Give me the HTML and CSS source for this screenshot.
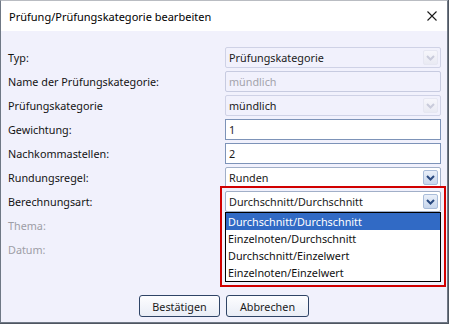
FILE: index.html
```html
<!DOCTYPE html>
<html lang="de">
<head>
<meta charset="utf-8">
<title>Prüfung/Prüfungskategorie bearbeiten</title>
<link rel="stylesheet" href="styles.css">
</head>
<body>
<div class="window">
  <div class="titlebar">
    <span class="title">Prüfung/Prüfungskategorie bearbeiten</span>
    <svg class="close" width="10" height="10" viewBox="0 0 10 10"><path d="M0.5 0.5 L9.5 9.5 M9.5 0.5 L0.5 9.5" stroke="#1a1a1a" stroke-width="1.1" fill="none"/></svg>
  </div>
  <div class="content">
    <div class="form">
      <div class="label">Typ:</div>
      <div class="combo disabled"><span class="val">Prüfungskategorie</span><span class="arrow"><svg width="9" height="6" viewBox="0 0 9 6"><path d="M1 1 L4.5 4.5 L8 1" fill="none" stroke-width="2"/></svg></span></div>

      <div class="label">Name der Prüfungskategorie:</div>
      <div class="textbox disabled"><span class="val">mündlich</span></div>

      <div class="label">Prüfungskategorie</div>
      <div class="combo disabled"><span class="val">mündlich</span><span class="arrow"><svg width="9" height="6" viewBox="0 0 9 6"><path d="M1 1 L4.5 4.5 L8 1" fill="none" stroke-width="2"/></svg></span></div>

      <div class="label">Gewichtung:</div>
      <div class="textbox"><span class="val">1</span></div>

      <div class="label">Nachkommastellen:</div>
      <div class="textbox"><span class="val">2</span></div>

      <div class="label">Rundungsregel:</div>
      <div class="combo"><span class="val">Runden</span><span class="arrow"><svg width="9" height="6" viewBox="0 0 9 6"><path d="M1 1 L4.5 4.5 L8 1" fill="none" stroke-width="2"/></svg></span></div>

      <div class="label">Berechnungsart:</div>
      <div class="combo open"><span class="val">Durchschnitt/Durchschnitt</span><span class="arrow"><svg width="9" height="6" viewBox="0 0 9 6"><path d="M1 1 L4.5 4.5 L8 1" fill="none" stroke-width="2"/></svg></span>
        <div class="highlight"></div>
        <ul class="droplist">
          <li class="selected">Durchschnitt/Durchschnitt</li>
          <li>Einzelnoten/Durchschnitt</li>
          <li>Durchschnitt/Einzelwert</li>
          <li>Einzelnoten/Einzelwert</li>
        </ul>
      </div>

      <div class="label muted">Thema:</div>
      <div></div>

      <div class="label muted">Datum:</div>
      <div></div>
    </div>
    <div class="buttons">
      <button class="btn btn-ok">Bestätigen</button>
      <button class="btn btn-cancel">Abbrechen</button>
    </div>
  </div>
</div>
</body>
</html>
```
FILE: styles.css
```css
* { box-sizing: border-box; }
html, body { margin: 0; padding: 0; }
body {
  width: 449px;
  height: 324px;
  background: #4f5661;
  font-family: "Noto Sans", "Open Sans", sans-serif;
  font-size: 10.8px;
  color: #1a1a1a;
  overflow: hidden;
}
.window {
  width: 448px;
  height: 323px;
  border: 1px solid #6f7885;
  border-top-color: #b9bcc2;
  display: flex;
  flex-direction: column;
  background: #f1f1fc;
}
.titlebar {
  height: 30px;
  background: #ffffff;
  display: flex;
  align-items: center;
  justify-content: space-between;
  padding: 0 10px 0 8px;
  flex: none;
}
.title {
  font-size: 11px;
  color: #000;
}
.close { display: block; }
.content {
  flex: 1;
  display: flex;
  flex-direction: column;
}
.form {
  display: grid;
  grid-template-columns: 217px 216px;
  grid-auto-rows: 21px;
  row-gap: 3px;
  padding: 16px 0 0 7px;
}
.label {
  display: flex;
  align-items: center;
  color: #141414;
  white-space: nowrap;
}
.label.muted { color: #9e9ea6; }
.val {
  flex: 1;
  white-space: nowrap;
  overflow: hidden;
}
.combo, .textbox {
  display: flex;
  align-items: center;
  padding: 0 2px 0 3px;
  height: 21px;
}
.textbox {
  background: #fff;
  border: 1px solid #7d93b8;
}
.textbox.disabled {
  background: #f1f1fc;
  border: 1px solid #c7cbe0;
  border-radius: 2px;
  color: #a3a3ab;
}
.combo {
  background: #fff;
  border: 1px solid #a1afc8;
  border-radius: 2px;
  position: relative;
}
.combo.disabled {
  background: #f1f1fc;
  border-color: #cfd2e6;
}
.arrow {
  width: 15px;
  height: 15px;
  border: 1px solid #a9bcd9;
  border-radius: 2px;
  background: linear-gradient(#e9eff9, #c7d6ec);
  display: flex;
  align-items: center;
  justify-content: center;
  flex: none;
}
.arrow svg path { stroke: #2a4a80; }
.combo.disabled .arrow {
  border-color: #e6e7f2;
  background: linear-gradient(#f6f6fb, #e9eaf3);
}
.combo.disabled .arrow svg path { stroke: #c9cbdb; }
.highlight {
  position: absolute;
  left: -6px;
  top: -6px;
  width: 226px;
  height: 101px;
  border: 2px solid #d10000;
  pointer-events: none;
}
.droplist {
  position: absolute;
  left: -1px;
  top: 20px;
  width: 216px;
  margin: 0;
  padding: 0;
  list-style: none;
  background: #fff;
  border: 1px solid #000;
  z-index: 2;
}
.droplist li {
  height: 17px;
  line-height: 17px;
  padding-left: 2px;
  color: #111;
  white-space: nowrap;
}
.droplist li.selected {
  background: #316ac5;
  color: #fff;
}
.buttons {
  display: flex;
  justify-content: center;
  gap: 6px;
  margin-top: 35px;
}
.btn {
  font-family: inherit;
  font-size: 10.8px;
  color: #1a1a1a;
  height: 22px;
  padding: 0;
  border: 1px solid #2f4466;
  border-radius: 3px;
  background: linear-gradient(#fdfdff, #e9edf6);
}
.btn-ok { width: 81px; }
.btn-cancel { width: 83px; }
```
